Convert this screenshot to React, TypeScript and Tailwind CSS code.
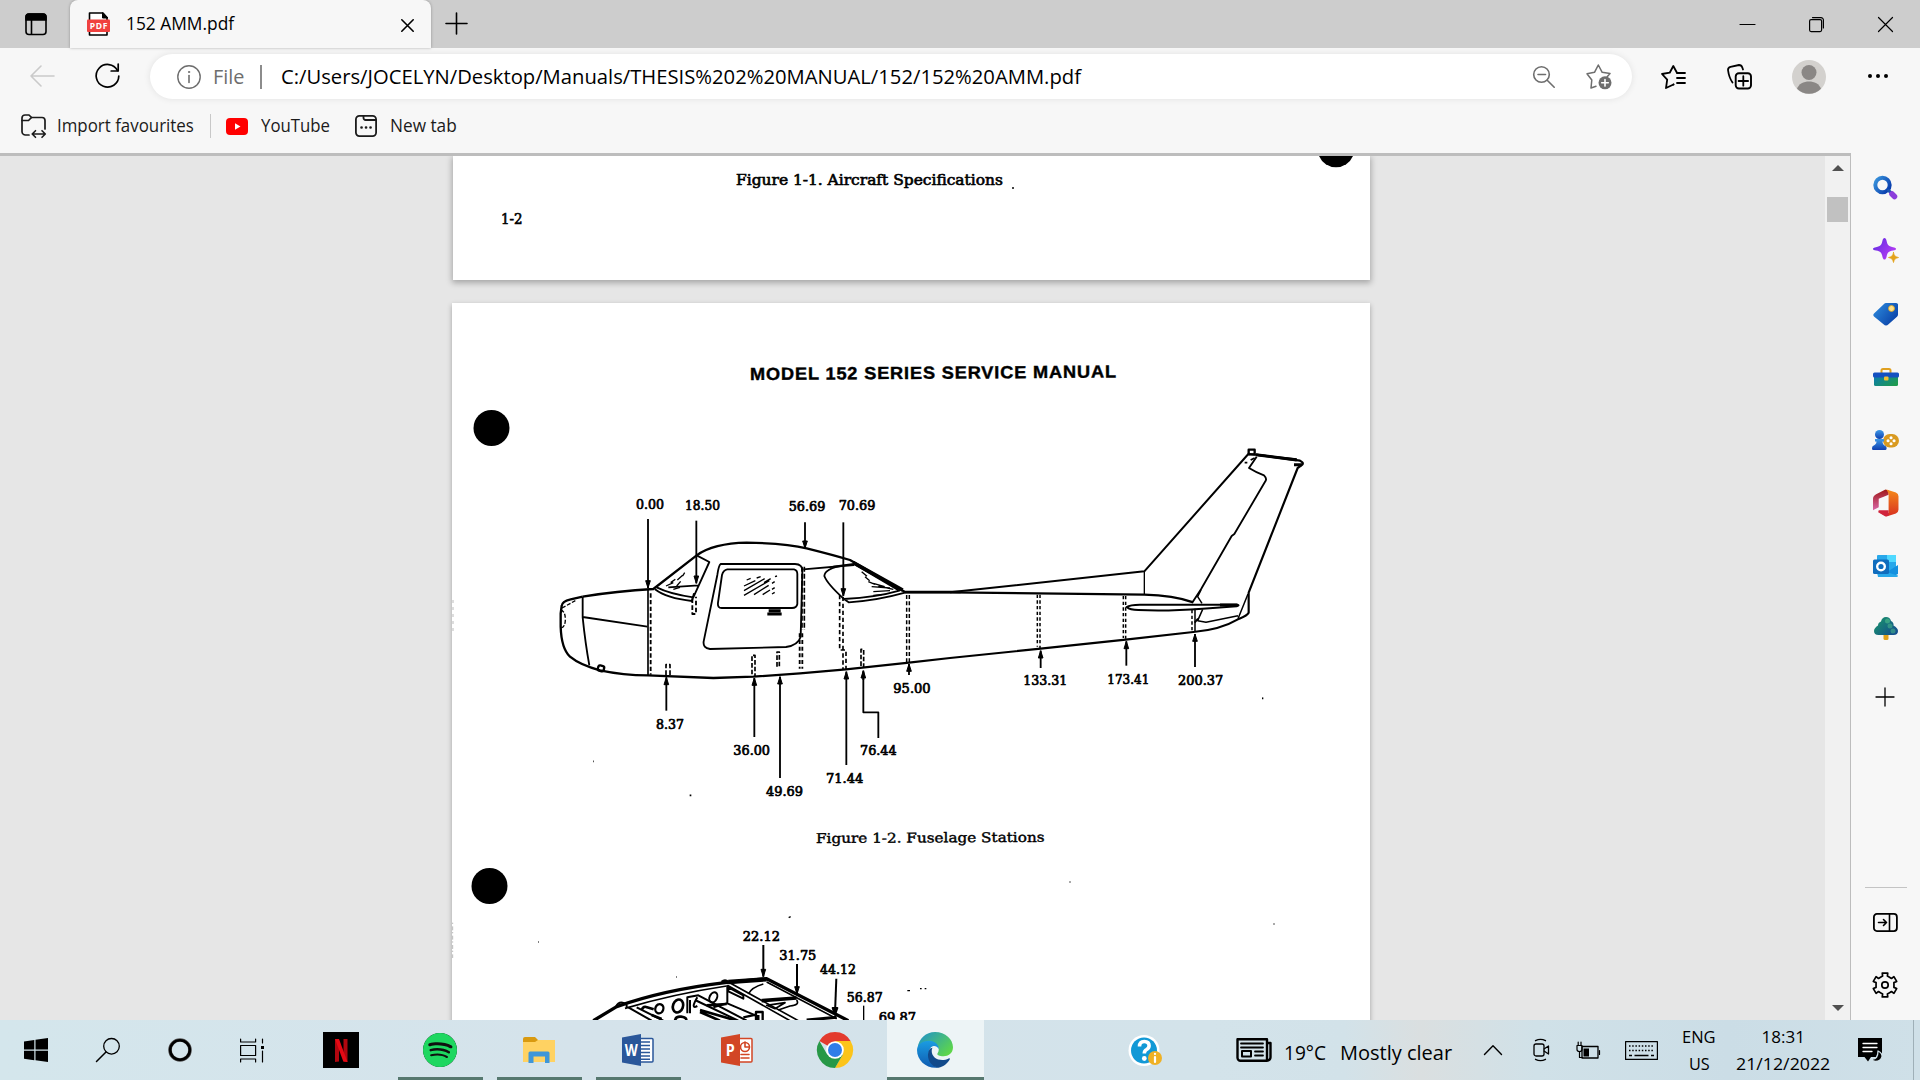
import React, { useLayoutEffect, useRef } from "react";
import { SiSpotify } from "react-icons/si";

/* Single-line text squeezed or stretched horizontally to a known width. */
function Fit({ w, className = "", children }: { w: number; className?: string; children: React.ReactNode }) {
  const ref = useRef<HTMLSpanElement>(null);
  useLayoutEffect(() => {
    const el = ref.current;
    if (el) el.style.transform = `scaleX(${w / el.offsetWidth})`;
  }, [w]);
  return (
    <span className={"block shrink-0 whitespace-nowrap " + className} style={{ width: w }}>
      <span ref={ref} className="inline-block origin-left">
        {children}
      </span>
    </span>
  );
}

type IconProps = { w: number; h: number; vb?: string; className?: string; children: React.ReactNode };
function Icon({ w, h, vb, className = "", children }: IconProps) {
  return (
    <svg
      width={w}
      height={h}
      viewBox={vb ?? `0 0 ${w} ${h}`}
      fill="none"
      stroke="currentColor"
      strokeWidth="1.6"
      strokeLinecap="round"
      strokeLinejoin="round"
      className={"block shrink-0 overflow-visible " + className}
    >
      {children}
    </svg>
  );
}

function TabStrip() {
  return (
    <div className="flex h-12 items-center bg-[#cdcdcd]">
      <div className="flex h-12 w-[70px] items-center pl-[25px]">
        <Icon w={22} h={23}>
          <rect x="1" y="1" width="20" height="20.5" rx="3" />
          <path d="M1 7V4a3 3 0 0 1 3-3h14a3 3 0 0 1 3 3v3z" fill="currentColor" />
          <path d="M6.500 7v14" />
        </Icon>
      </div>
      <div className="flex h-12 w-[361px] items-center rounded-t-[8px] bg-[#f7f7f7] pl-[17px] shadow-[0_0_3px_rgba(0,0,0,0.3)]">
        <Icon w={23} h={24}>
          <path d="M2.500 1h13.500l4 4.500V23h-17.500z" fill="#fff" stroke="#000" />
          <path d="M15.500 1v5h5z" fill="#000" stroke="#000" strokeWidth="1" />
          <rect x="0" y="7.500" width="23" height="12.500" rx="1" fill="#f0413f" stroke="none" />
          <text x="2.800" y="17" fontSize="8.500" fontWeight="700" fontFamily="Open Sans" fill="#fff" stroke="none" textLength="17.500">
            PDF
          </text>
        </Icon>
        <Fit w={108} className="ml-[16px] pb-[2px] text-[18px] leading-[24px] text-black">152 AMM.pdf</Fit>
        <Icon w={13} h={13} className="ml-auto mr-[17px] mt-0.5">
          <path d="M.8.8l11.400 11.400M12.200.8L.8 12.200" />
        </Icon>
      </div>
      <Icon w={21} h={21} className="mb-px ml-[15px]">
        <path d="M10.500 0v21M0 10.500h21" />
      </Icon>
      <div className="ml-auto flex items-center pr-[27px]">
        <Icon w={15} h={15}>
          <path d="M0 7.500h15" strokeWidth="1.200" />
        </Icon>
        <Icon w={15} h={15} className="ml-[54px]">
          <rect x=".6" y="2.600" width="12" height="12" rx="1.500" strokeWidth="1.200" />
          <path d="M3.500.6h8.500a2.400 2.400 0 0 1 2.400 2.400v8" strokeWidth="1.200" />
        </Icon>
        <Icon w={15} h={15} className="ml-[54px]">
          <path d="M.5.5l14 14M14.500.5l-14 14" strokeWidth="1.200" />
        </Icon>
      </div>
    </div>
  );
}

function Toolbar() {
  return (
    <div className="flex h-[57px] items-center pr-[32px]">
      <Icon w={24} h={22} className="mb-[2px] ml-[30px] text-[#cacaca]">
        <path d="M24 11H1M11 1L1 11l10 10" />
      </Icon>
      <Icon w={25} h={26} className="mb-px ml-[41px]">
        <path d="M22.500 7.500A11.300 11.300 0 1 0 23.800 13" strokeWidth="1.700" />
        <path d="M23.200 1v7h-7" strokeWidth="1.700" />
      </Icon>
      <div className="ml-[30px] flex h-[45px] w-[1482px] items-center rounded-full bg-white pl-[27px] pr-[20px] text-[#6e6e6e] shadow-[0_0_7px_rgba(0,0,0,0.09)]">
        <Icon w={24} h={24}>
          <circle cx="12" cy="12" r="11.200" strokeWidth="1.400" />
          <path d="M12 10.500v7" />
          <circle cx="12" cy="7" r=".7" fill="currentColor" strokeWidth=".8" />
        </Icon>
        <Fit w={31} className="ml-[12px] pb-[2px] text-[20.500px] leading-[28px]">File</Fit>
        <span className="ml-[16px] h-6 w-[2px] bg-[#8c8c8c]" />
        <Fit w={800} className="ml-[19px] pb-[2px] text-[20.500px] leading-[28px] text-black">
          C:/Users/JOCELYN/Desktop/Manuals/THESIS%202%20MANUAL/152/152%20AMM.pdf
        </Fit>
        <Icon w={22} h={22} className="ml-auto">
          <circle cx="8.500" cy="8.500" r="7.800" />
          <path d="M14.200 14.200l7 7M5 8.500h7.500" />
        </Icon>
        <Icon w={26} h={26} className="ml-[31px]">
          <path d="M10 22.300L5 24l.8-8L1 9.800l7.500-1.500L12.300 1l3.900 7.300 7.800 1.300-3 3.500" strokeWidth="1.500" />
          <circle cx="19" cy="18.800" r="6.500" fill="currentColor" stroke="none" />
          <path d="M19 15.500v6.600M15.700 18.800h6.600" stroke="#fff" />
        </Icon>
      </div>
      <Icon w={25} h={24} className="ml-[29px]">
        <path d="M12.500 19.500L5 23l1.200-8.300L1 9l7.700-1.300L12.300 1l3.500 6.500" strokeWidth="1.800" />
        <path d="M12.500 19.500l0 0M16 8h8M16 13h8M16 18h8" strokeWidth="1.800" />
      </Icon>
      <Icon w={25} h={26} className="ml-[41px]">
        <rect x="8.700" y="9.200" width="15.300" height="15.300" rx="3.200" strokeWidth="1.900" />
        <path d="M16.300 12.200v9.500M11.600 17h9.500" strokeWidth="1.800" />
        <path d="M5.500 18.500C3 15 1.400 9 1 6c0-2 1-2.800 2.500-3.200L12 1c2 0 2.800 1 3.300 2.500l.7 2" strokeWidth="1.800" />
      </Icon>
      <Icon w={34} h={34} className="ml-[40px]">
        <circle cx="17" cy="17" r="17" fill="#d3d1ce" stroke="none" />
        <circle cx="17" cy="12.500" r="7.500" fill="#8a8785" stroke="none" />
        <path d="M5 28.800C8 19 26 19 29 28.800A17 17 0 0 1 5 28.800z" fill="#8a8785" stroke="none" />
      </Icon>
      <div className="mb-px ml-auto flex gap-[4px]">
        <span className="size-1 rounded-full bg-black" />
        <span className="size-1 rounded-full bg-black" />
        <span className="size-1 rounded-full bg-black" />
      </div>
    </div>
  );
}

function Bookmarks() {
  return (
    <div className="flex h-[48px] items-center pb-[6px] pl-[21px] text-[18px] leading-[24px] text-[#1b1b1b]">
      <Icon w={25} h={24} className="mb-px">
        <path d="M8 21H4.500A3.500 3.500 0 0 1 1 17.500V4a3 3 0 0 1 3-3h4l2.500 2.500H21a3 3 0 0 1 3 3V15" strokeWidth="1.700" />
        <path d="M1 6.500h6.500l3-3" strokeWidth="1.700" />
        <path d="M11.500 20h12.500M14.500 16.700L11.200 20l3.300 3.300M21 16.700l3.300 3.300-3.300 3.300" />
      </Icon>
      <Fit w={137} className="ml-[11px] pb-[2px]">Import favourites</Fit>
      <span className="ml-[16px] h-6 w-px bg-[#c8c8c8]" />
      <Icon w={22} h={17} className="ml-[15px]">
        <rect width="22" height="17" rx="4" fill="#f00" stroke="none" />
        <path d="M9 5.200l5.500 3.300L9 11.800z" fill="#fff" stroke="none" />
      </Icon>
      <Fit w={69} className="ml-[13px] pb-[2px]">YouTube</Fit>
      <Icon w={22} h={22} className="ml-[25px]">
        <rect x=".9" y=".9" width="20.200" height="20.200" rx="3.500" strokeWidth="1.800" />
        <path d="M8.500 1v2a2 2 0 0 0 2 2H21" strokeWidth="1.800" />
        <path d="M6.500 12.500h.1M11 12.500h.1M15.500 12.500h.1" strokeWidth="2.600" />
      </Icon>
      <Fit w={67} className="ml-[13px] pb-[2px]">New tab</Fit>
    </div>
  );
}

/* Station label drawn in the typewriter face of the scan. */
function Label({ x, y, w, children }: { x: number; y: number; w: number; children: string }) {
  return (
    <text x={x} y={y + 2} textLength={w} lengthAdjust="spacingAndGlyphs" fontSize="40" fontFamily="DejaVu Serif" fill="#000" stroke="#000" strokeWidth="2.200">
      {children}
    </text>
  );
}

function Arrow({ x, from, to }: { x: number; from: number; to: number }) {
  const s = Math.sign(to - from);
  return (
    <g>
      <path d={`M${x} ${from}V${to}`} />
      <path d={`M${x} ${to}l-7 ${-22 * s}h14z`} fill="#000" strokeWidth="3" />
    </g>
  );
}

function Fuselage() {
  return (
    <g stroke="#000" fill="none" strokeWidth="5.5" strokeLinejoin="round">
      <g transform="translate(540 480) scale(.33333)">
        <path d="M128 350L92 358Q66 364 65 378L62 400V440Q64 505 90 530Q120 555 180 571Q250 586 324 586Q430 590 520 594L640 590L780 580L918 568L1107 548" strokeWidth="7" />
        <path d="M62 390q14 4 14 28t-14 26M66 384l40-22" strokeWidth="4" strokeDasharray="12 5" />
        <path d="M128 350Q230 333 340 327L470 226Q520 190 620 188Q740 190 800 205Q880 225 930 240L1095 336H1262" strokeWidth="7" />
        <path d="M128 350V412Q136 490 148 556M128 411L322 440" />
        <path d="M324 330V586" strokeWidth="5" />
        <path d="M332 340V584" strokeDasharray="13 7" />
        <rect x="174" y="557" width="18" height="16" rx="5" strokeWidth="7" transform="rotate(15 183 565)" />
        <path d="M470 226L508 246L460 352Q390 342 350 322M345 328Q380 355 456 363L462 340M385 322L475 316" />
        <path d="M378 318l22-10M400 328l20-6M392 308l14-10M410 318l12-14M412 300l16-14M428 288l6-10" strokeWidth="4" />
        <path d="M457 355V402H468V350" strokeDasharray="14 7" />
        <path d="M542 252H765Q788 252 787 275L782 470Q775 495 738 501L510 507Q488 504 491 484L532 285Q536 256 542 252z" />
        <path d="M562 268H762Q772 270 772 282V372Q770 384 756 384H545Q532 384 534 368L546 285Q550 270 562 268z" />
        <path d="M620 300l12-5M650 294l12-4M705 290l6-2M612 318l34-16M612 332l62-36M612 346l76-44M642 344l44-28M668 344l22-14M696 310l8-5M696 328l8-5M696 342l8-5M672 308l20-12" strokeWidth="4" />
        <path d="M686 392h36M682 402h43" strokeWidth="9" />
        <path d="M793 260V450M786 260V450" strokeWidth="5" strokeDasharray="15 6" />
        <path d="M779 460V566M787 460V566" strokeDasharray="12 8" />
        <path d="M790 268L942 255" />
        <path d="M910 257Q855 265 853 288Q862 312 912 357Q1010 352 1078 332L942 252L880 260M912 357L926 367Q1010 362 1095 338" />
        <path d="M940 248L1088 330" strokeWidth="11" />
        <path d="M965 275l16 14M975 290l14 12M985 305l20 8M995 320l55 4M1000 335l50-3M1000 310l34 10M1000 346l26-2M1015 318l45 10" strokeWidth="4" />
        <path d="M899 345V510H918V568M909 350V512M909 520V568" strokeDasharray="13 8" strokeWidth="5" />
        <path d="M1100 345V546M1108 345V546" strokeDasharray="12 7" strokeWidth="4.5" />
        <path d="M378 585V554H390V588M636 583V526H645V588M711 560V516H718V562M963 558V508H971V562" strokeDasharray="14 6" strokeWidth="5" />
        <Arrow x={324} from={117} to={324} />
        <Arrow x={469} from={122} to={310} />
        <Arrow x={795} from={127} to={205} />
        <Arrow x={910} from={127} to={348} />
        <Arrow x={379} from={692} to={592} />
        <Arrow x={643} from={771} to={594} />
        <Arrow x={720} from={894} to={590} />
        <Arrow x={919} from={855} to={575} />
        <path d="M1015 774V697H970V575" />
        <Arrow x={970} from={600} to={572} />
        <Arrow x={1107} from={585} to={552} />
        <Label x={288} y={85} w={84}>0.00</Label>
        <Label x={435} y={87} w={105}>18.50</Label>
        <Label x={746} y={90} w={110}>56.69</Label>
        <Label x={896} y={88} w={110}>70.69</Label>
        <Label x={348} y={744} w={84}>8.37</Label>
        <Label x={580} y={823} w={110}>36.00</Label>
        <Label x={678} y={946} w={111}>49.69</Label>
        <Label x={858} y={906} w={112}>71.44</Label>
        <Label x={960} y={823} w={110}>76.44</Label>
        <Label x={1060} y={637} w={112}>95.00</Label>
        <path d="M449 946h5M160 844h2" />
      </g>
      <g transform="translate(900 430) scale(.33333)">
        <path d="M15 487L150 487L733 494Q820 496 880 517" strokeWidth="7" />
        <path d="M150 487L733 424L1045 72L1190 88" strokeWidth="6" />
        <path d="M733 424V494" strokeWidth="4" />
        <path d="M1068 74L1200 92Q1212 98 1207 104L1193 114L1046 488V548Q1042 556 1018 566Q960 600 880 606L677 629L422 656L150 684L27 698" strokeWidth="6.5" />
        <path d="M1068 74L1190 90M1182 104h24" strokeWidth="9" />
        <rect x="1046" y="59" width="18" height="14" strokeWidth="7" />
        <path d="M1070 80L1047 114Q1066 126 1092 136Q1102 146 1096 154L1003 312L995 318L903 478L878 516" />
        <path d="M1034 98h8M1052 90l12-6" />
        <path d="M680 531Q690 524 720 524L1012 524Q1020 526 1010 529L908 536Q800 544 715 540Q690 540 680 531z" strokeWidth="6" />
        <path d="M960 525h52" strokeWidth="9" />
        <path d="M903 480L893 500L906 520M908 538L893 572L918 577L1014 557M1014 566L1044 492M885 536V606" strokeWidth="4.5" />
        <path d="M884 578l10-12" />
        <path d="M876 540V604M412 494V650M420 494V654M670 498V624M677 498V626" strokeDasharray="10 7" strokeWidth="4.5" />
        <Arrow x={422} from={714} to={662} />
        <Arrow x={679} from={707} to={634} />
        <Arrow x={885} from={711} to={612} />
        <Label x={370} y={764} w={132}>133.31</Label>
        <Label x={622} y={760} w={126}>173.41</Label>
        <Label x={834} y={764} w={136}>200.37</Label>
        <path d="M1086 805h4" />
      </g>
    </g>
  );
}

function Wing() {
  return (
    <g transform="translate(450 900) scale(.33333)" stroke="#000" fill="none" strokeWidth="6" strokeLinejoin="round">
      <path d="M430 362L500 320Q640 270 825 248L950 236L1195 362" strokeWidth="10" />
      <path d="M525 325Q670 282 830 258M950 246L1160 356M835 246L1045 362M832 256L1020 362" strokeWidth="5" />
      <path d="M835 246L950 238" strokeWidth="13" />
      <path d="M815 246q10-8 20 0" strokeWidth="8" />
      <path d="M498 320q6-14 20-12t12 14M535 322L605 362M560 322L640 362M832 256V310L925 350M832 310L790 322M835 262l45 24v10l-45-22z" />
      <ellipse cx="628" cy="326" rx="12" ry="14" strokeWidth="7" transform="rotate(20 628 326)" />
      <ellipse cx="684" cy="318" rx="15" ry="20" strokeWidth="8" transform="rotate(20 684 318)" />
      <ellipse cx="790" cy="292" rx="11" ry="16" transform="rotate(25 790 292)" />
      <path d="M712 340V292L745 286L890 362M720 340V300M742 292Q720 330 742 318M735 300L865 362" strokeWidth="6" />
      <path d="M575 330q6-14 16-8l20 6M605 345l30 12M675 362q2-14 18-12t16 10M750 330L860 362M750 336L810 362M770 316L830 312" strokeWidth="8" />
      <path d="M918 362V336h20V362M880 352l38-8M925 345v17" strokeWidth="7" />
      <path d="M940 252Q905 262 895 282M950 316L1005 308L975 326zM1040 300Q1050 316 1020 318L985 330" strokeWidth="5" />
      <path d="M935 302L1040 294" strokeWidth="11" />
      <path d="M1070 360L1160 352" strokeWidth="9" />
      <Arrow x={940} from={135} to={230} />
      <Arrow x={1041} from={192} to={282} />
      <path d="M1159 236L1155 340" />
      <path d="M1148 324h14l-7 20z" fill="#000" />
      <path d="M1241 317V362" strokeWidth="4" />
      <Label x={878} y={120} w={112}>22.12</Label>
      <Label x={988} y={179} w={111}>31.75</Label>
      <Label x={1110} y={219} w={108}>44.12</Label>
      <Label x={1190} y={303} w={108}>56.87</Label>
      <Label x={1286} y={365} w={112}>69.87</Label>
      <path d="M1016 53l6-3M1372 272h8M1410 266h5M1424 266h5M265 126h2M679 231h2" strokeWidth="4" />
      <path d="M8 68v106" stroke="#bbb" strokeWidth="3" strokeDasharray="4 7 12 5" />
    </g>
  );
}

function Viewer() {
  return (
    <div className="h-[864px] w-[1825px] overflow-hidden bg-[#e6e6e6]">
      <div className="ml-[453px] flex h-[124px] w-[917px] items-start bg-white shadow-[0_2px_6px_1px_rgba(0,0,0,0.28)]">
        <div className="pl-[48px] pt-[53px]">
          <Fit w={22} className="font-['DejaVu_Serif'] text-[14px] leading-[20px] text-black [-webkit-text-stroke:0.6px_#000]">1-2</Fit>
        </div>
        <div className="pl-[213px] pt-[14px]">
          <Fit w={267} className="font-['DejaVu_Serif'] text-[14px] leading-[20px] text-black [-webkit-text-stroke:0.6px_#000]">
            Figure 1-1. Aircraft Specifications
          </Fit>
        </div>
        <span className="ml-[9px] mt-[31px] h-[2px] w-[2px] bg-[#444]" />
        <Icon w={34} h={12} className="ml-[305px]">
          <path d="M0 0h34A18.500 18.500 0 0 1 0 0z" fill="#000" stroke="none" />
        </Icon>
      </div>
      <div className="relative ml-[452px] mt-[23px] h-[740px] w-[918px] bg-white shadow-[0_2px_5px_rgba(0,0,0,0.3)]">
        <div className="pl-[298px] pt-[58px]">
          <div className="origin-left -rotate-[0.4deg]">
            <Fit w={367} className="font-['Liberation_Sans'] text-[17.500px] font-bold leading-[26px] tracking-[0.8px] text-black [-webkit-text-stroke:0.4px_#000]">
              MODEL 152 SERIES SERVICE MANUAL
            </Fit>
          </div>
        </div>
        <div className="pl-[364px] pt-[441px]">
          <div className="origin-left -rotate-[0.3deg]">
            <Fit w={229} className="font-['DejaVu_Serif'] text-[13.500px] leading-[20px] text-black [-webkit-text-stroke:0.4px_#000]">
              Figure 1-2. Fuselage Stations
            </Fit>
          </div>
        </div>
        <svg className="absolute left-0 top-0" width="918" height="717" viewBox="452 303 918 717">
          <circle cx="491.500" cy="428" r="18" />
          <circle cx="489.500" cy="886" r="18" />
          <path d="M453 600v35" stroke="#bbb" strokeDasharray="3 4" />
          <path d="M1069 882h2M1273 924h2" stroke="#555" />
          <Fuselage />
          <Wing />
        </svg>
      </div>
    </div>
  );
}

function Scrollbar() {
  return (
    <div className="flex w-[25px] flex-col items-center bg-[#f1f1f1]">
      <span className="mt-[9px] h-0 w-0 border-x-[6px] border-b-[6px] border-x-transparent border-b-[#505050]" />
      <span className="mt-[26px] h-[25px] w-[21px] bg-[#c1c1c1]" />
      <span className="mb-[9px] mt-auto h-0 w-0 border-x-[6px] border-t-[6px] border-x-transparent border-t-[#505050]" />
    </div>
  );
}

function gearPath() {
  const p: string[] = [];
  for (let i = 0; i < 6; i++) {
    const c = -90 + i * 60;
    [[-24, 9], [-15, 9.2], [-13, 12.2], [13, 12.2], [15, 9.2], [24, 9]].forEach(([a, r]) => {
      const t = ((c + a) * Math.PI) / 180;
      p.push(`${(13 + r * Math.cos(t)).toFixed(2)} ${(13 + r * Math.sin(t)).toFixed(2)}`);
    });
  }
  return "M" + p.join("L") + "z";
}

function Grad({ id, a, b, v }: { id: string; a: string; b: string; v?: boolean }) {
  return (
    <linearGradient id={id} x1="0" y1="0" x2={v ? "0" : "1"} y2={v ? "1" : ".7"}>
      <stop offset="0" stopColor={a} />
      <stop offset="1" stopColor={b} />
    </linearGradient>
  );
}

function Sidebar() {
  const cell = "flex h-[63px] w-full shrink-0 items-center justify-center";
  return (
    <div className="flex w-[69px] flex-col items-center pt-[3px]">
      <div className={cell}>
        <Icon w={25} h={24}>
          <Grad id="s1" a="#3a96dd" b="#0a3fae" />
          <circle cx="9.500" cy="9" r="7.200" stroke="url(#s1)" strokeWidth="4" />
          <path d="M15.500 14.500l3 2.500" stroke="#1a56b0" strokeWidth="3" />
          <path d="M19 18l2.500 2.500" stroke="#8b3ddb" strokeWidth="5.500" />
        </Icon>
      </div>
      <div className={cell}>
        <Icon w={26} h={25} className="text-transparent">
          <Grad id="s2" a="#5a2be0" b="#b93df5" />
          <path d="M11.500 0c1 0 1.700 1 2 2.500C14.500 7 15 8 20 9.300c2 .4 3 .8 3 1.600s-1 1.200-3 1.600c-5 1-5.500 2-6.500 6.500-.3 1.500-1 2.600-2 2.600s-1.700-1.100-2-2.600c-1-4.500-1.500-5.500-6.500-6.500-2-.4-3-.8-3-1.600s1-1.200 3-1.600c5-1.300 5.500-2.300 6.500-6.800.3-1.500 1-2.500 2-2.500z" fill="url(#s2)" />
          <path d="M20.500 14.500c.8 3.500 1.500 4 5 5-3.500 1-4.200 1.500-5 5-.8-3.500-1.500-4-5-5 3.500-1 4.200-1.500 5-5z" fill="#e3a21a" stroke="#e3a21a" strokeWidth=".8" />
        </Icon>
      </div>
      <div className={cell}>
        <Icon w={25} h={24} vb="0 -.5 25 23">
          <Grad id="s3" a="#2f8fe0" b="#0a42a8" />
          <path d="M13 0h9.500A2 2 0 0 1 25 2.500v9a3 3 0 0 1-1 2.200l-8.500 7.500a3.500 3.500 0 0 1-5 0L1 13.500a2 2 0 0 1 0-3L11 1a3 3 0 0 1 2-1z" fill="url(#s3)" stroke="none" />
          <circle cx="18.500" cy="5.500" r="3" fill="#ffe08a" stroke="#d9a520" strokeWidth=".8" />
        </Icon>
      </div>
      <div className={cell}>
        <Icon w={26} h={20} vb="0 -.5 26 19">
          <Grad id="s4" a="#0a78b8" b="#1e9a50" />
          <path d="M8.500 5V2.500a1.500 1.500 0 0 1 1.500-1.500h6a1.500 1.500 0 0 1 1.500 1.500V5" stroke="#e0a020" strokeWidth="2" />
          <rect x="1" y="6" width="24" height="12" rx="1.500" fill="url(#s4)" stroke="none" />
          <rect x="0" y="4.500" width="26" height="5" rx="1.500" fill="#1450c0" stroke="none" />
          <rect x="11" y="8.500" width="4.500" height="4" rx="1" fill="#f5c030" stroke="none" />
        </Icon>
      </div>
      <div className={cell}>
        <Icon w={27} h={22} vb="0 0 27 20">
          <Grad id="s5" a="#3d9ae8" b="#0f3fb0" v />
          <rect x="11" y="4" width="16" height="13.500" rx="6.700" fill="#d99a20" stroke="none" />
          <path d="M16 10.700h.1M22 10.700h.1M19 7.700h.1M19 13.700h.1" stroke="#fff" strokeWidth="3" />
          <circle cx="7.500" cy="4.500" r="4.500" fill="url(#s5)" stroke="none" />
          <path d="M3 9h9v2.500H10.500c0 2 1 3.500 3 4.500 1.500.8 1.500 4 0 4H1c-1.500 0-1-3.500 0-4 2.500-1.200 3.500-2.500 3.500-4.500H3z" fill="url(#s5)" stroke="none" />
        </Icon>
      </div>
      <div className={cell}>
        <Icon w={26} h={28} vb="0 0 25 26" className="text-transparent">
          <Grad id="s6" a="#a01818" b="#d868a8" v />
          <Grad id="s6b" a="#f58a1a" b="#d83020" v />
          <path d="M12 0L3 4.500Q0 6 0 9v11l5.500-3V9l9.500-4V1z" fill="url(#s6)" />
          <path d="M13 0l9 3q2.500 1 2.500 3.500v13q0 2.500-2.500 3.500l-9 3-6-3.500h8V4z" fill="url(#s6b)" />
          <path d="M5.500 20h9.500v5l-3 1-7-4z" fill="#d0243c" />
        </Icon>
      </div>
      <div className={cell}>
        <Icon w={25} h={24} vb="0 0 25 22" className="text-transparent">
          <rect x="4" y="0" width="19" height="18" rx="1" fill="#28a8ea" />
          <path d="M14 0h9v7h-9z" fill="#50d9ff" />
          <path d="M4 20h19l2-1v-9L14 17z" fill="#1490df" />
          <path d="M4 17h9l12 3.500q0 1.500-1.500 1.500H5z" fill="#28a8ea" />
          <rect x="0" y="4.500" width="16" height="14.500" rx="1.500" fill="#0f6cbd" />
          <circle cx="8" cy="11.500" r="3.800" stroke="#fff" strokeWidth="2.400" />
        </Icon>
      </div>
      <div className={cell}>
        <Icon w={24} h={25} vb="0 0 24 23" className="text-transparent">
          <Grad id="s8" a="#1a9a68" b="#14508c" />
          <rect x="9.500" y="16" width="5" height="7" rx="1.500" fill="#e3a21a" />
          <path d="M7 4.500Q8 0 12 0t5 4q3 1.500 2.500 4.500Q24 11 24 14q0 4-4.500 4h-15Q0 18 0 14q0-3 4-5.500Q4 5.500 7 4.500z" fill="url(#s8)" />
          <circle cx="13.500" cy="4" r="2.500" fill="#4fc08a" opacity=".6" />
          <circle cx="16" cy="9" r="2.500" fill="#4fc08a" opacity=".5" />
          <circle cx="19" cy="14" r="2.500" fill="#4fc08a" opacity=".5" />
        </Icon>
      </div>
      <Icon w={18} h={18} className="mr-[2px] mt-[28px]">
        <path d="M9 0v18M0 9h18" strokeWidth="1.300" />
      </Icon>
      <span className="mt-auto h-px w-[42px] bg-[#c4c4c4]" />
      <Icon w={25} h={19} className="mr-px mt-[25px]">
        <rect x=".9" y=".9" width="23" height="17.200" rx="3" strokeWidth="1.800" />
        <path d="M16.500 1v17M5.500 9.500h8M10.500 6.500l3 3-3 3" />
      </Icon>
      <Icon w={26} h={26} className="mb-[22px] mr-px mt-[40px]">
        <path d={gearPath()} strokeWidth="1.700" />
        <circle cx="13" cy="13" r="3.200" strokeWidth="1.700" />
      </Icon>
    </div>
  );
}

function OfficeApp({ letter, color, children }: { letter: string; color: string; children: React.ReactNode }) {
  return (
    <Icon w={32} h={32}>
      <rect x="16" y="4.500" width="15" height="23.500" rx="1" fill="#fff" stroke={color} strokeWidth="1.500" />
      {children}
      <path d="M0 3.500L19 0v32L0 28.500z" fill={color} stroke="none" />
      <text x="9.300" y="22" fontSize="16" fontWeight="700" fontFamily="Open Sans" textAnchor="middle" fill="#fff" stroke="none" textLength={letter === "W" ? 13 : 9} lengthAdjust="spacingAndGlyphs">
        {letter}
      </text>
    </Icon>
  );
}

function Taskbar() {
  const app = "flex h-[60px] items-center justify-center border-b-[3px] pr-[2px] pt-[3px]";
  return (
    <div className="flex h-[60px] items-center bg-[linear-gradient(90deg,#d4e6ec_0%,#d5e3eb_30%,#d3e3ea_63%,#d2e2e9_70%,#dadfe0_74%,#d0e1e8_80%,#cbdde6_90%,#cfe0e8_100%)] text-black">
      <Icon w={24} h={24} className="ml-[24px]">
        <path d="M0 3.500l10.300-1.500v9.500H0zM11.500 1.800L24 0v11.500H11.500zM0 12.700h10.300v9.500L0 20.700zM11.500 12.700H24V24l-12.500-1.700z" fill="currentColor" stroke="none" />
      </Icon>
      <Icon w={24} h={24} className="ml-[48px]">
        <circle cx="15.500" cy="8.300" r="7.800" strokeWidth="1.300" />
        <path d="M10 14L.5 23.500" strokeWidth="1.500" />
      </Icon>
      <Icon w={24} h={24} className="ml-[48px]">
        <circle cx="12" cy="12" r="10" stroke="#555" strokeWidth="3.600" />
        <circle cx="12" cy="12" r="9.800" strokeWidth="2.600" />
      </Icon>
      <Icon w={24} h={23} className="ml-[48px]">
        <path d="M.6 0v3h15V0M.6 6.500h15v10H.6zM.6 23v-3h15v3M22.500 0v4M22.500 12v11" strokeWidth="1.200" />
        <rect x="21" y="7" width="3" height="3" fill="currentColor" stroke="none" />
      </Icon>
      <Icon w={36} h={36} className="ml-[59px]">
        <rect width="36" height="36" fill="#000" stroke="none" />
        <path d="M12 7h4v22.500l-4 .5zM20.500 7h4v23l-4-.5z" fill="#b1060f" stroke="none" />
        <path d="M12 7h4l8.500 23-4.200-.5z" fill="#e50914" stroke="none" />
      </Icon>
      <div className={app + " ml-[39px] w-[85px] border-[#56786f]"}>
        <div className="rounded-full bg-[#101010]">
          <SiSpotify className="size-[34px] text-[#1ed760]" />
        </div>
      </div>
      <div className={app + " ml-[14px] w-[85px] border-[#56786f]"}>
        <Icon w={32} h={26}>
          <path d="M0 2a2 2 0 0 1 2-2h10l3 3v3H0z" fill="#d99a10" stroke="none" />
          <path d="M0 5h12l3-2h17v22H0z" fill="#ffd262" stroke="none" />
          <path d="M5.500 26V16a1.500 1.500 0 0 1 1.500-1.500h18a1.500 1.500 0 0 1 1.500 1.500v10H22v-6.500H10.500V26z" fill="#3f96d8" stroke="none" />
        </Icon>
      </div>
      <div className={app + " ml-[14px] w-[85px] border-[#56786f]"}>
        <OfficeApp letter="W" color="#2a579a">
          <path d="M19 8h9M19 11.500h9M19 15h9M19 18.500h9M19 22h9M19 25.200h9" stroke="#2a579a" strokeLinecap="butt" />
        </OfficeApp>
      </div>
      <div className={app + " ml-[14px] w-[85px] border-transparent"}>
        <OfficeApp letter="P" color="#d24625">
          <circle cx="24" cy="13" r="4.500" stroke="#d24625" />
          <path d="M24 13V8M24 13h4M20 20.500h8M20 24h8" stroke="#d24625" />
        </OfficeApp>
      </div>
      <div className={app + " ml-[13px] w-[86px] border-transparent"}>
        <Icon w={36} h={36} className="text-transparent">
          <path d="M18 18L2.400 9A18 18 0 0 1 33.600 9z" fill="#e33b2e" />
          <path d="M18 9h15.600A18 18 0 0 1 18 36l8-14z" fill="#fcc41a" />
          <path d="M2.400 9L10.200 22.500 18 26l7.800-3.500L18 36A18 18 0 0 1 2.400 9z" fill="#279847" />
          <circle cx="18" cy="18" r="8.800" fill="#fff" />
          <circle cx="18" cy="18" r="7" fill="#2f7de9" />
        </Icon>
      </div>
      <div className={app + " ml-[8px] w-[97px] border-[#56786f] bg-[#edf4f6]"}>
        <Icon w={36} h={36} vb="0 0 24 24" className="text-transparent">
          <Grad id="e1" a="#1c8fd0" b="#5ed64a" />
          <Grad id="e2" a="#1b9de2" b="#0f5bb0" v />
          <path d="M.4 10.500C1.200 4.500 6 0 12 0c7 0 12 5 12 10.200 0 4-3.200 6-6.300 6-3 0-4.200-.9-4.200-1.500 0-.5 1-1 1-3C14.500 9 12 6.500 8 6.500c-4 0-6.500 2-7.600 4z" fill="url(#e1)" />
          <path d="M0 12c0-3.500 3.500-6.200 8-6.200 4 0 6.500 2.500 6.600 5.500-1-1.500-2.200-2.200-3.600-2C8.500 9.800 7.500 13 8 16c.6 4 3.500 7 6.500 7.700C7 25 0 19.500 0 12z" fill="url(#e2)" />
          <path d="M8.800 11c-3 3.500-1.500 11.500 5.500 12.800 3.500-.6 6-3 7.500-5.500.3-.6-.2-.9-.7-.6-5 2.500-11.300.2-11.300-5 0-.8.200-1.500.5-2.200z" fill="#114a8b" />
        </Icon>
      </div>
      <Icon w={34} h={34} className="ml-[144px] mt-[3px]">
        <circle cx="16" cy="15.500" r="15.500" fill="#fff" stroke="none" />
        <circle cx="16" cy="15.500" r="13" fill="#1299d6" stroke="none" />
        <path d="M11.500 11.500q0-5 4.800-5t4.800 4.300q0 2.300-2.500 3.700-2.300 1.200-2.300 4" stroke="#fff" strokeWidth="3.600" strokeLinecap="butt" />
        <circle cx="16.300" cy="23.500" r="2.400" fill="#fff" stroke="none" />
        <circle cx="27" cy="23" r="7" fill="#efb125" stroke="none" />
        <path d="M27 22v5M27 18.800v.1" stroke="#fff" strokeWidth="2.200" />
      </Icon>
      <div className="ml-auto flex items-center">
        <Icon w={36} h={24}>
          <path d="M1.500 1.200h29.500v21.500H4.500a3 3 0 0 1-3-3zM31 5h3.500v14a3.500 3.500 0 0 1-3.500 3.700" strokeWidth="2.400" />
          <path d="M5 5.500h22M5 9.500h22M19 13.500h8M19 17.500h8" strokeWidth="1.800" />
          <rect x="6" y="13" width="9" height="5.500" strokeWidth="2" />
        </Icon>
        <Fit w={42} className="ml-[12px] pt-[5px] text-[20px] leading-[26px]">19°C</Fit>
        <Fit w={112} className="ml-[14px] pt-[5px] text-[20px] leading-[26px]">Mostly clear</Fit>
        <Icon w={18} h={10} className="ml-[32px]">
          <path d="M.5 9.500L9 .8l8.500 8.700" strokeWidth="1.400" />
        </Icon>
        <Icon w={17} h={22} className="ml-[31px]">
          <rect x="1" y="5" width="10" height="12" rx="2" strokeWidth="1.300" />
          <path d="M11 10l4.500-3v8L11 12M2.500 1.700q5-2.500 10 0M2.500 20.300q5 2.500 10 0" strokeWidth="1.300" />
        </Icon>
        <Icon w={24} h={17} className="ml-[26px]">
          <rect x="6" y="4.500" width="16" height="11.500" strokeWidth="1.300" />
          <rect x="7.500" y="6.500" width="5.500" height="8" fill="currentColor" stroke="none" />
          <path d="M23.500 8.500v4M1 3.500h5v4q0 2-2.500 2T1 7.500zM2.200 0v3M5 0v3M3.500 9.500v6h3" strokeWidth="1.200" />
        </Icon>
        <Icon w={33} h={19} className="ml-[25px]">
          <rect x=".6" y=".6" width="31.800" height="17.800" strokeWidth="1.200" />
          <path d="M4 5h25M4 9.500h25" strokeWidth="1.400" strokeDasharray="1.500 1.700" strokeLinecap="butt" />
          <path d="M4 14.500h3M9.500 14.500h14M26 14.500h3" strokeWidth="1.300" strokeLinecap="butt" />
        </Icon>
        <div className="ml-[24px] flex flex-col items-center text-[17px] leading-[27px]">
          <Fit w={34}>ENG</Fit>
          <Fit w={21}>US</Fit>
        </div>
        <div className="ml-[20px] flex flex-col items-center text-[17px] leading-[27px]">
          <Fit w={43}>18:31</Fit>
          <Fit w={94}>21/12/2022</Fit>
        </div>
        <Icon w={25} h={24} className="ml-[28px]">
          <path d="M0 0h24v19H13l-3 4.500L6.500 19H0z" fill="#000" stroke="none" />
          <path d="M5 5.500h14M5 9.500h14M5 13.500h9" stroke="#fff" strokeWidth="1.300" />
          <path d="M20 13q4.500 2 4 6-1.500 4.500-6.500 4.500-3 0-3.500-2.500 6 .5 6-8z" fill="#000" stroke="#d0e0e8" strokeWidth="1.300" />
        </Icon>
        <span className="ml-[30px] mr-[6px] h-[60px] w-px bg-[#9fb0b8]" />
      </div>
    </div>
  );
}

export default function App() {
  return (
    <div className="flex h-[1080px] w-[1920px] flex-col overflow-hidden bg-[#f7f7f7] font-['Open_Sans',sans-serif] text-black">
      <TabStrip />
      <Toolbar />
      <Bookmarks />
      <div className="flex h-[867px]">
        <div className="flex w-[1851px] border-r border-t-[3px] border-[#bdbdbd]">
          <Viewer />
          <Scrollbar />
        </div>
        <Sidebar />
      </div>
      <Taskbar />
    </div>
  );
}
